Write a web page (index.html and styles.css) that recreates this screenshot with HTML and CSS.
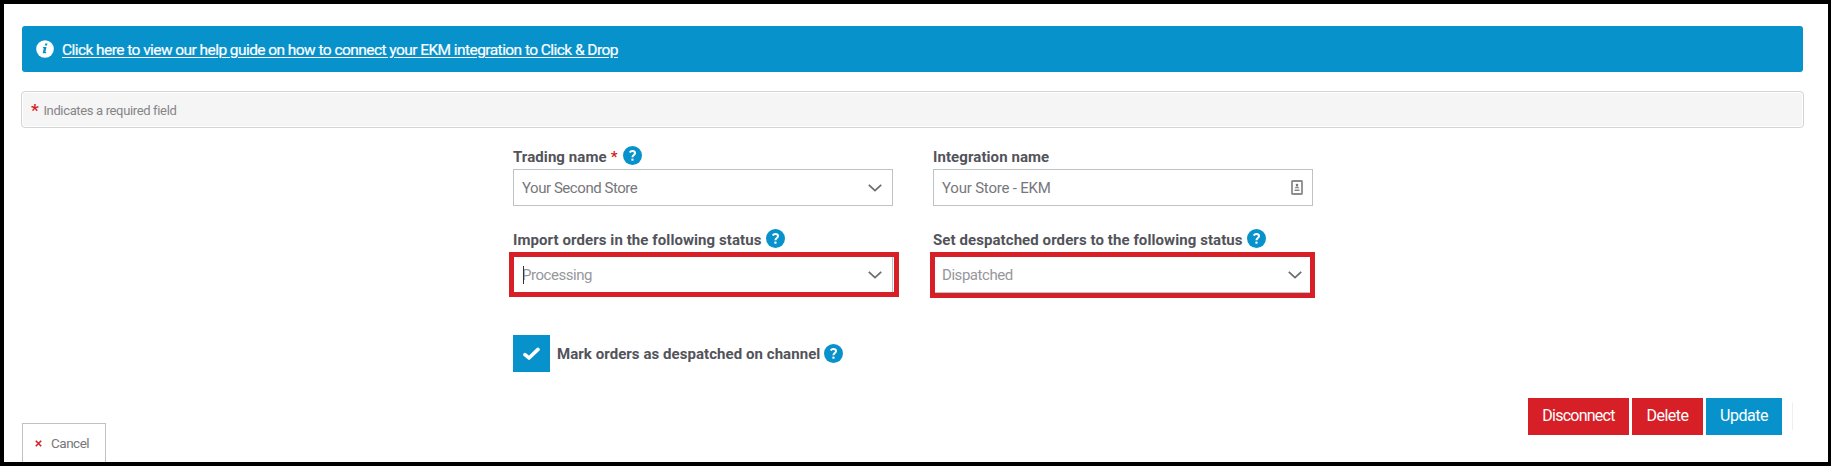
FILE: index.html
```html
<!DOCTYPE html>
<html lang="en">
<head>
  <meta charset="UTF-8">
  <meta name="viewport" content="width=device-width, initial-scale=1">
  <title>EKM integration settings</title>
  <link rel="stylesheet" href="styles.css">
</head>
<body>

<svg class="sprite" aria-hidden="true">
  <symbol id="help" viewBox="0 0 19 19">
    <circle cx="9.5" cy="9.5" r="9.5" fill="#0892cb"/>
    <path d="M6.7 6.6c.6-1 1.5-1.5 2.7-1.5 1.5 0 2.6.8 2.6 2.1 0 1.8-2.6 1.9-2.6 4.1" fill="none" stroke="#fff" stroke-width="2"/>
    <rect x="8.4" y="12.6" width="2.1" height="2.1" fill="#fff"/>
  </symbol>
  <symbol id="chevron" viewBox="0 0 14 8">
    <path d="M.8.8 7 6.7 13.2.8" fill="none" stroke="#6b6b70" stroke-width="1.7"/>
  </symbol>
</svg>

<div class="banner">
  <svg class="info" viewBox="0 0 18 18">
    <circle cx="9" cy="9" r="8.8" fill="#fff"/>
    <path d="M9.2 3.6h2.2l-.4 1.9H8.8zM7.1 6.9h3.4l-1.1 5h.9l-.3 1.4H6.7l1.1-5h-1z" fill="#0892cb"/>
  </svg>
  <a href="#">Click here to view our help guide on how to connect your EKM integration to Click &amp; Drop</a>
</div>

<div class="required"><span class="star">*</span><span>Indicates a required field</span></div>

<form class="fields">
  <div class="field">
    <div class="label"><span>Trading name</span><b class="star">*</b><svg class="help"><use href="#help"/></svg></div>
    <div class="control"><span>Your Second Store</span><svg class="chevron"><use href="#chevron"/></svg></div>
  </div>
  <div class="field">
    <div class="label"><span>Integration name</span></div>
    <div class="control ekm"><span>Your Store - EKM</span>
      <svg class="contact" viewBox="0 0 12 15">
        <rect x="1" y="1" width="10" height="13" rx=".5" fill="#fff" stroke="#8c8c8c" stroke-width="1.8"/>
        <circle cx="6" cy="5" r="1.3" fill="#777"/>
        <path d="M3.8 8.2C3.8 6 8.2 6 8.2 8.2zM3.5 9.6h5v1.5h-5z" fill="#888"/>
      </svg>
    </div>
  </div>
  <div class="field">
    <div class="label"><span>Import orders in the following status</span><svg class="help"><use href="#help"/></svg></div>
    <div class="control muted"><i class="caret"></i><span>Processing</span><svg class="chevron"><use href="#chevron"/></svg><div class="highlight import"></div></div>
  </div>
  <div class="field">
    <div class="label"><span>Set despatched orders to the following status</span><svg class="help"><use href="#help"/></svg></div>
    <div class="control muted"><span>Dispatched</span><svg class="chevron"><use href="#chevron"/></svg><div class="highlight despatch"></div></div>
  </div>
</form>

<div class="mark">
  <span class="checkbox">
    <svg viewBox="0 0 17 14"><path d="M2 7.6 6 11 15 2.4" fill="none" stroke="#fff" stroke-width="3.6" stroke-linecap="round" stroke-linejoin="round"/></svg>
  </span>
  <span>Mark orders as despatched on channel</span><svg class="help"><use href="#help"/></svg>
</div>

<div class="actions">
  <button class="btn red disconnect">Disconnect</button>
  <button class="btn red delete">Delete</button>
  <button class="btn update">Update</button>
  <i class="divider"></i>
</div>

<button class="cancel">
  <svg viewBox="0 0 7 7"><path d="M.8.8 6.2 6.2M6.2.8.8 6.2" stroke="#d61f26" stroke-width="1.6"/></svg>
  <span>Cancel</span>
</button>

</body>
</html>
```
FILE: styles.css
```css
* { margin: 0; padding: 0; box-sizing: border-box; }
body {
  height: 466px;
  border: 4px solid #000;
  border-right-width: 3px;
  padding: 22px 25px 0 18px;
  overflow: hidden;
  background: #fff;
  color: #53535a;
  font-family: Roboto, "Liberation Sans", sans-serif;
  font-size: 15px;
  white-space: nowrap;
}

svg { display: block; flex: none; }
.sprite { display: none; }
.star { color: #d61f26; font-weight: bold; }

.banner {
  display: flex;
  align-items: center;
  height: 46px;
  padding: 2px 0 0 14px;
  gap: 8px;
  border-radius: 3px;
  background: #0892cb;
  font-size: 15.5px;
  letter-spacing: -0.56px;
}
.banner a { color: #fff; -webkit-text-stroke: 0.2px #fff; text-underline-offset: 2px; }
.info { width: 18px; height: 18px; margin-top: -2px; }

.required {
  display: flex;
  align-items: center;
  gap: 5px;
  height: 37px;
  margin: 19px -1px 0;
  padding: 2px 0 0 9px;
  border: 1px solid #d4d4d4;
  border-radius: 4px;
  background: #f5f5f5;
  box-shadow: inset 0 0 0 1px #fff;
  color: #858588;
  font-size: 13px;
  letter-spacing: -0.35px;
}
.required .star { font-size: 17px; line-height: 17px; }

.fields {
  display: grid;
  grid-template-columns: 380px 380px;
  column-gap: 40px;
  row-gap: 22px;
  margin: 17px 0 0 491px;
}
.label {
  display: flex;
  align-items: center;
  gap: 4px;
  height: 21px;
  margin-bottom: 3px;
  padding-top: 2px;
  font-weight: bold;
  letter-spacing: 0.08px;
}
.field:nth-child(n+3) .label { margin-bottom: 7px; }
.label .help { margin-top: -2px; }
.help { width: 19px; height: 19px; }
.label .star + .help { margin-left: 1px; }
.control {
  position: relative;
  display: flex;
  align-items: center;
  height: 37px;
  padding: 0 10px 0 8px;
  border: 1px solid #c0c3c5;
  color: #77777b;
  letter-spacing: -0.45px;
}
.control svg { margin-left: auto; }
.ekm { padding-right: 9px; letter-spacing: -0.2px; }
.muted { color: #97979b; }
.chevron { width: 14px; height: 8px; }
.contact { width: 12px; height: 15px; }
.caret { position: absolute; left: 9px; width: 1px; height: 18px; background: #333; }

/* red outlines round the two status fields */
.highlight { position: absolute; border: 5px solid #d61f26; }
.import { left: -5px; top: -5px; width: 390px; height: 45px; }
.despatch { left: -4px; top: -5px; width: 385px; height: 46px; }

.mark {
  display: flex;
  align-items: center;
  height: 37px;
  margin: 42px 0 0 491px;
  font-weight: bold;
  letter-spacing: 0.06px;
}
.checkbox {
  display: grid;
  place-items: center;
  width: 37px;
  height: 37px;
  margin-right: 7px;
  background: #0892cb;
}
.checkbox svg { width: 17px; height: 14px; }
.mark .help { margin-left: 4px; }

.actions { display: flex; justify-content: flex-end; gap: 3px; margin: 26px 10px 0 0; }
.btn {
  height: 37px;
  padding-bottom: 2px;
  border: none;
  background: #0892cb;
  color: #fff;
  font: 16px Roboto, "Liberation Sans", sans-serif;
  letter-spacing: -0.5px;
}
.red { background: #d61f26; }
.disconnect { width: 101px; letter-spacing: -0.75px; }
.delete { width: 71px; }
.update { width: 76px; }
.divider { width: 1px; height: 27px; margin: 5px 0 0 7px; background: #eee; }

.cancel {
  display: flex;
  align-items: center;
  gap: 9px;
  width: 84px;
  height: 42px;
  margin-top: -12px;
  padding: 0 0 2px 12px;
  border: 1px solid #bfc2c4;
  background: #fff;
  color: #77777b;
  font: 13.5px Roboto, "Liberation Sans", sans-serif;
  letter-spacing: -0.5px;
}
.cancel svg { width: 7px; height: 7px; }
```
